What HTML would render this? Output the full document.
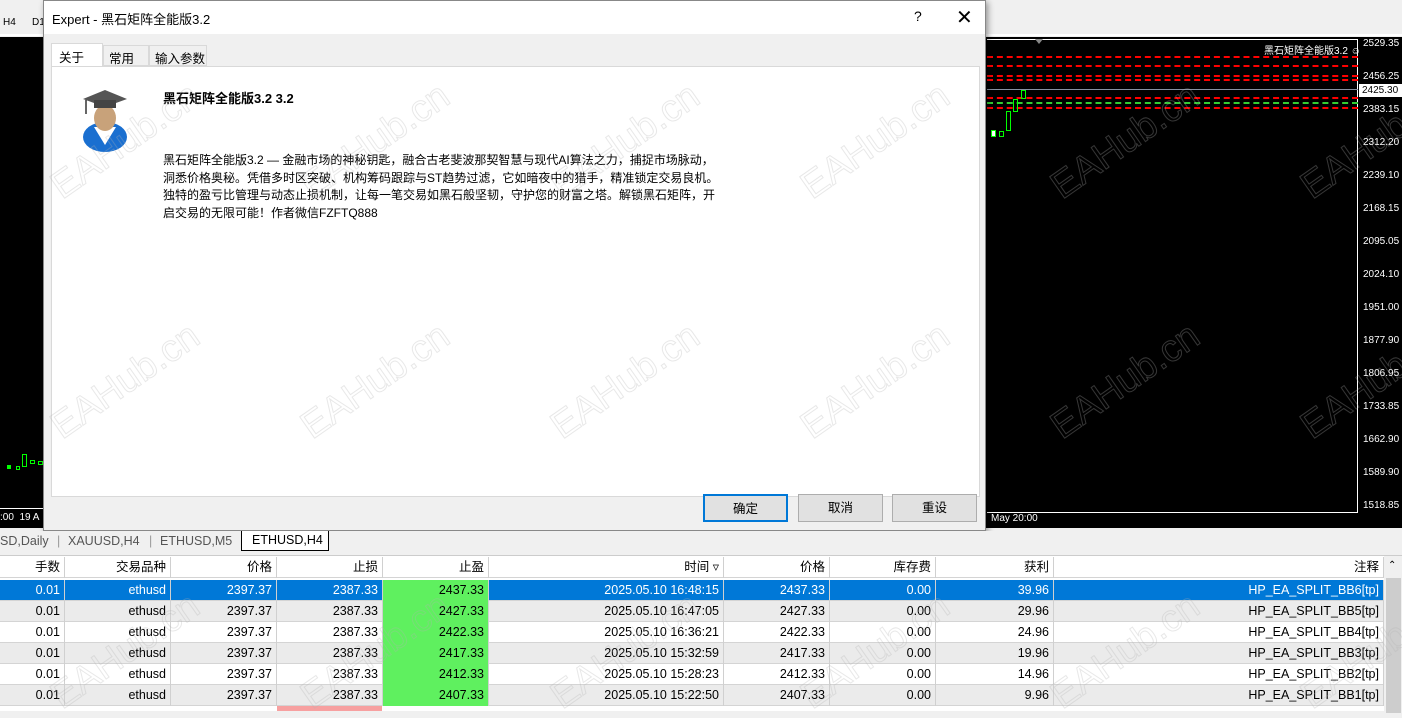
<!DOCTYPE html>
<html><head><meta charset="utf-8">
<style>
*{margin:0;padding:0;box-sizing:border-box}
body{width:1402px;height:711px;overflow:hidden;position:relative;background:#f0f0f0;font-family:"Liberation Sans","Noto Sans CJK SC",sans-serif;font-size:12px;color:#000}
.abs{position:absolute}
.chart{left:0;top:37px;width:1402px;height:491px;background:#000}
.dash{position:absolute;left:987px;width:371px;height:0;border-top:2px dashed #f00}
.pl{position:absolute;left:1363px;color:#fff;font-size:10px}
.dlg{left:43px;top:0;width:943px;height:531px;background:#f0f0f0;border:1px solid #888;box-shadow:2px 2px 6px rgba(0,0,0,.4)}
.row{position:absolute;left:0;width:1384px;height:21px;border-bottom:1px solid #d4d4d4}
.c{position:absolute;top:0;height:21px;line-height:21px;text-align:right;padding-right:4px;border-right:1px solid #d0d0d0;font-size:12.5px}
.btn{position:absolute;top:493px;height:28px;width:85px;background:#e1e1e1;border:1px solid #adadad;text-align:center;line-height:26px;font-size:12.5px}
.wm{position:absolute;font-size:38px;color:transparent;-webkit-text-stroke:1px rgba(180,180,180,.3);transform:rotate(-35deg);font-family:"Liberation Sans",sans-serif;white-space:nowrap}
</style></head><body>
<div class="abs" style="left:0;top:12px;width:43px;height:22px;background:#f0f0f0;font-size:10px"><span style="position:absolute;left:3px;top:5px">H4</span><span style="position:absolute;left:32px;top:5px">D1</span></div>
<div class="abs" style="left:0;top:34px;width:1402px;height:2px;background:#fff"></div>
<div class="abs chart"></div>
<div class="abs" style="left:7px;top:465px;width:4px;height:4px;background:#0f0"></div>
<div class="abs" style="left:16px;top:466px;width:4px;height:4px;border:1px solid #0f0"></div>
<div class="abs" style="left:22px;top:454px;width:5px;height:13px;border:1px solid #0f0"></div>
<div class="abs" style="left:30px;top:460px;width:5px;height:4px;border:1px solid #0f0"></div>
<div class="abs" style="left:38px;top:461px;width:5px;height:4px;border:1px solid #0f0"></div>
<div class="abs" style="left:0;top:508px;width:44px;border-top:1px solid #fff"></div>
<div class="abs" style="left:0;top:512px;color:#fff;font-size:10px">:00 &nbsp;19 A</div>
<div class="abs" style="left:987px;top:39px;width:371px;border-top:1px solid #fff"></div>
<div class="abs" style="left:1357px;top:39px;height:473px;border-left:1px solid #fff"></div>
<div class="abs" style="left:987px;top:512px;width:371px;border-top:1px solid #fff"></div>
<div class="abs" style="left:1035px;top:39px;width:0;height:0;border:4px solid transparent;border-top:5px solid #888"></div>
<div class="abs" style="left:1264px;top:42px;color:#fff;font-size:10px">黑石矩阵全能版3.2 ☺</div>
<div class="dash" style="top:56px"></div>
<div class="dash" style="top:65px"></div>
<div class="dash" style="top:75px"></div>
<div class="dash" style="top:79px"></div>
<div class="abs" style="left:987px;top:89px;width:371px;border-top:1px solid #8890a0"></div>
<div class="dash" style="top:97px"></div>
<div class="abs" style="left:987px;top:102px;width:371px;border-top:2px dashed #3c3"></div>
<div class="dash" style="top:107px"></div>
<div class="abs" style="left:991px;top:130px;width:5px;height:7px;border:1px solid #0f0;background:#fff"></div>
<div class="abs" style="left:999px;top:131px;width:5px;height:6px;border:1px solid #0f0"></div>
<div class="abs" style="left:1006px;top:111px;width:5px;height:20px;border:1px solid #0f0"></div>
<div class="abs" style="left:1013px;top:99px;width:5px;height:13px;border:1px solid #0f0"></div>
<div class="abs" style="left:1021px;top:90px;width:5px;height:9px;border:1px solid #0f0"></div>
<div class="abs" style="left:991px;top:513px;color:#fff;font-size:10px">May 20:00</div>
<div class="pl" style="top:38px">2529.35</div>
<div class="pl" style="top:71px">2456.25</div>
<div class="abs" style="left:1359px;top:84px;width:43px;height:13px;background:#fff;color:#000;font-size:10px;padding-left:3px;line-height:13px">2425.30</div>
<div class="pl" style="top:104px">2383.15</div>
<div class="pl" style="top:137px">2312.20</div>
<div class="pl" style="top:170px">2239.10</div>
<div class="pl" style="top:203px">2168.15</div>
<div class="pl" style="top:236px">2095.05</div>
<div class="pl" style="top:269px">2024.10</div>
<div class="pl" style="top:302px">1951.00</div>
<div class="pl" style="top:335px">1877.90</div>
<div class="pl" style="top:368px">1806.95</div>
<div class="pl" style="top:401px">1733.85</div>
<div class="pl" style="top:434px">1662.90</div>
<div class="pl" style="top:467px">1589.90</div>
<div class="pl" style="top:500px">1518.85</div>
<div class="abs dlg">
 <div class="abs" style="left:0;top:0;width:941px;height:33px;background:#fff"></div>
 <div class="abs" style="left:8px;top:8px;font-size:13px">Expert - 黑石矩阵全能版3.2</div>
 <div class="abs" style="left:870px;top:7px;font-size:14px">?</div>
 <div class="abs" style="left:912px;top:4px;font-size:20px;font-weight:300">✕</div>
 <div class="abs" style="left:7px;top:42px;width:52px;height:24px;background:#fff;border:1px solid #d9d9d9;border-bottom:none;padding:3px 0 0 7px;font-size:12.5px">关于</div>
 <div class="abs" style="left:59px;top:44px;width:46px;height:21px;background:#f0f0f0;border:1px solid #d9d9d9;padding:2px 0 0 5px;font-size:12.5px">常用</div>
 <div class="abs" style="left:105px;top:44px;width:58px;height:21px;background:#f0f0f0;border:1px solid #d9d9d9;padding:2px 0 0 5px;font-size:12.5px">输入参数</div>
 <div class="abs" style="left:7px;top:65px;width:929px;height:431px;background:#fff;border:1px solid #d9d9d9"></div>
 <svg class="abs" style="left:36px;top:86px" width="50" height="66" viewBox="0 0 50 66">
  <ellipse cx="25" cy="50" rx="22" ry="15" fill="#1a6fd0"/>
  <path d="M14 40 L25 58 L36 40 Z" fill="#fff"/>
  <ellipse cx="25" cy="31" rx="11" ry="13" fill="#c8a27a"/>
  <polygon points="3,12 25,3 47,12 25,20" fill="#555"/>
  <rect x="14" y="13" width="22" height="8" fill="#444"/>
  <line x1="6" y1="13" x2="6" y2="27" stroke="#333" stroke-width="1.5"/>
 </svg>
 <div class="abs" style="left:119px;top:87px;font-size:13px;font-weight:bold">黑石矩阵全能版3.2 3.2</div>
 <div class="abs" style="left:119px;top:151px;width:560px;font-size:12px;line-height:17.5px">黑石矩阵全能版3.2 — 金融市场的神秘钥匙，融合古老斐波那契智慧与现代AI算法之力，捕捉市场脉动，洞悉价格奥秘。凭借多时区突破、机构筹码跟踪与ST趋势过滤，它如暗夜中的猎手，精准锁定交易良机。独特的盈亏比管理与动态止损机制，让每一笔交易如黑石般坚韧，守护您的财富之塔。解锁黑石矩阵，开启交易的无限可能！作者微信FZFTQ888</div>
 <div class="btn" style="left:659px;border:2px solid #0078d7">确定</div>
 <div class="btn" style="left:754px">取消</div>
 <div class="btn" style="left:848px">重设</div>
</div>
<div class="abs" style="left:0;top:531px;width:1402px;height:20px;background:#f0f0f0;font-size:12.5px;color:#555">
 <span class="abs" style="left:0;top:3px">SD,Daily</span>
 <span class="abs" style="left:57px;top:3px;color:#999">|</span>
 <span class="abs" style="left:68px;top:3px">XAUUSD,H4</span>
 <span class="abs" style="left:149px;top:3px;color:#999">|</span>
 <span class="abs" style="left:160px;top:3px">ETHUSD,M5</span>
 <div class="abs" style="left:241px;top:0;width:88px;height:20px;background:#fff;border:1px solid #000;border-top:none;color:#000;padding:2px 0 0 10px">ETHUSD,H4</div>
</div>
<div class="abs" style="left:0;top:555px;width:1402px;height:156px;background:#fff;border-top:1px solid #ccc"></div>
<div class="abs" style="left:1384px;top:556px;width:18px;height:155px;background:#f0f0f0"><div style="margin:4px 0 0 4px;font-size:10px">⌃</div><div style="position:absolute;top:22px;left:2px;width:15px;height:135px;background:#cdcdcd"></div></div>
<div id="tbl"></div>
<div class="wm" style="left:40px;top:120px">EAHub.cn</div>
<div class="wm" style="left:290px;top:120px">EAHub.cn</div>
<div class="wm" style="left:540px;top:120px">EAHub.cn</div>
<div class="wm" style="left:790px;top:120px">EAHub.cn</div>
<div class="wm" style="left:1040px;top:120px">EAHub.cn</div>
<div class="wm" style="left:1290px;top:120px">EAHub.cn</div>
<div class="wm" style="left:40px;top:360px">EAHub.cn</div>
<div class="wm" style="left:290px;top:360px">EAHub.cn</div>
<div class="wm" style="left:540px;top:360px">EAHub.cn</div>
<div class="wm" style="left:790px;top:360px">EAHub.cn</div>
<div class="wm" style="left:1040px;top:360px">EAHub.cn</div>
<div class="wm" style="left:1290px;top:360px">EAHub.cn</div>
<div class="wm" style="left:40px;top:630px">EAHub.cn</div>
<div class="wm" style="left:290px;top:630px">EAHub.cn</div>
<div class="wm" style="left:540px;top:630px">EAHub.cn</div>
<div class="wm" style="left:790px;top:630px">EAHub.cn</div>
<div class="wm" style="left:1040px;top:630px">EAHub.cn</div>
<div class="wm" style="left:1290px;top:630px">EAHub.cn</div>
<script>
var cols=[0,65,171,277,383,489,724,830,936,1054,1384];
var hdr=["手数","交易品种","价格","止损","止盈","时间 ▿","价格","库存费","获利","注释"];
var data=[["2437.33","2025.05.10 16:48:15","39.96","BB6"],["2427.33","2025.05.10 16:47:05","29.96","BB5"],["2422.33","2025.05.10 16:36:21","24.96","BB4"],["2417.33","2025.05.10 15:32:59","19.96","BB3"],["2412.33","2025.05.10 15:28:23","14.96","BB2"],["2407.33","2025.05.10 15:22:50","9.96","BB1"]];
var h='';
function row(y,cells,bg,col,green){
 h+='<div class="row" style="top:'+y+'px;background:'+bg+';color:'+col+'">';
 for(var i=0;i<10;i++){var st='left:'+cols[i]+'px;width:'+(cols[i+1]-cols[i])+'px;';
  if(green&&i==4)st+='background:#5ff05f;color:#000;';
  h+='<div class="c" style="'+st+'">'+cells[i]+'</div>';}
 h+='</div>';}
row(557,hdr,'#fff','#000',false);
for(var r=0;r<6;r++){var d=data[r];
 var bg=r==0?'#0078d7':(r%2==1?'#ebebeb':'#fff');var col=r==0?'#fff':'#000';
 row(580+r*21,["0.01","ethusd","2397.37","2387.33",d[0],d[1],d[0],"0.00",d[2],"HP_EA_SPLIT_"+d[3]+"[tp]"],bg,col,true);}
h+='<div class="abs" style="left:277px;top:706px;width:105px;height:5px;background:#f7a0a0"></div>';
document.getElementById('tbl').innerHTML=h;
</script>
</body></html>
